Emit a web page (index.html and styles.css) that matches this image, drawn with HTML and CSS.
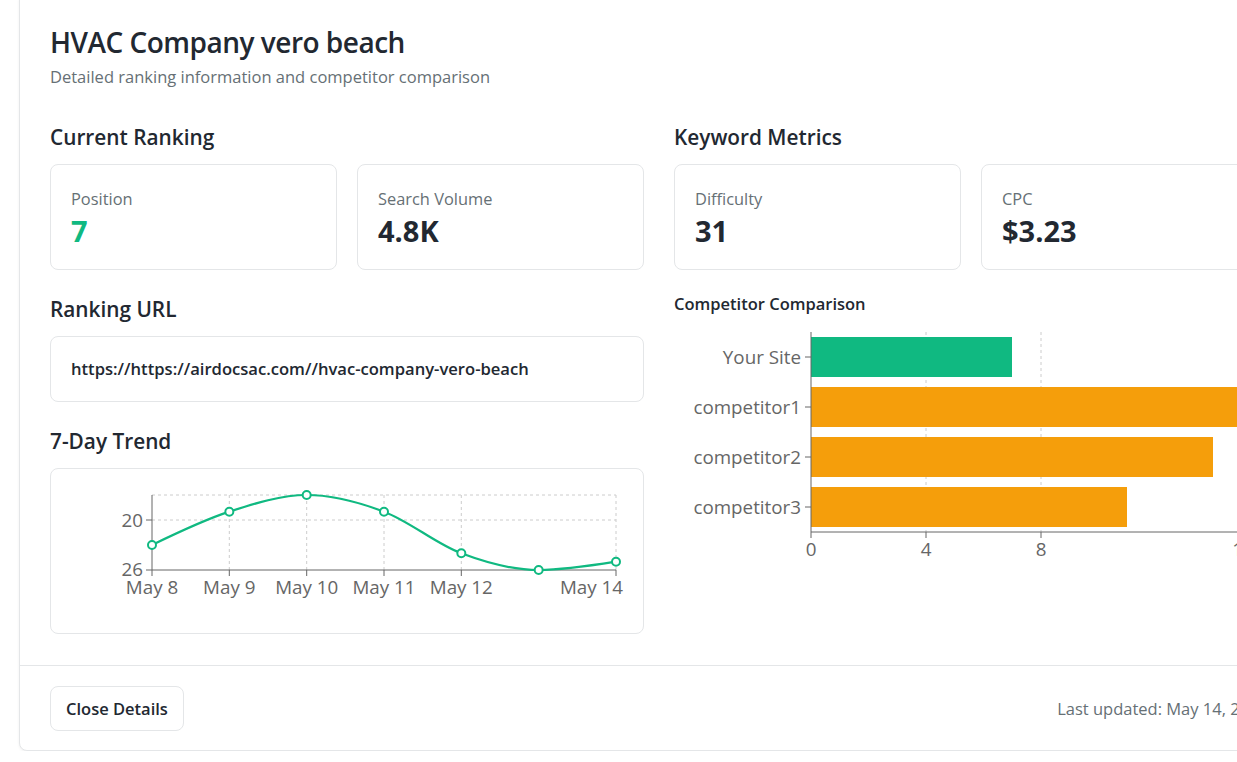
FILE: index.html
```html
<!DOCTYPE html>
<html lang="en">
<head>
<meta charset="utf-8">
<title>HVAC Company vero beach</title>
<link rel="stylesheet" href="styles.css">
</head>
<body>
<div class="card">
  <div class="card-body">
    <header class="head">
      <h1 class="title">HVAC Company vero beach</h1>
      <p class="subtitle">Detailed ranking information and competitor comparison</p>
    </header>
    <div class="columns">
      <section class="col">
        <h2 class="section-title">Current Ranking</h2>
        <div class="metrics">
          <div class="metric">
            <div class="metric-label">Position</div>
            <div class="metric-value green">7</div>
          </div>
          <div class="metric">
            <div class="metric-label">Search Volume</div>
            <div class="metric-value">4.8K</div>
          </div>
        </div>
        <h2 class="section-title">Ranking URL</h2>
        <div class="url-box">https://https://airdocsac.com//hvac-company-vero-beach</div>
        <h2 class="section-title">7-Day Trend</h2>
        <div class="chart-box">
          <svg class="line-chart" width="591" height="164" viewBox="51 469 591 164">
            <g class="grid">
              <line x1="152" y1="495" x2="616" y2="495"/>
              <line x1="152" y1="520" x2="616" y2="520"/>
              <line x1="229.3" y1="495" x2="229.3" y2="570"/>
              <line x1="306.7" y1="495" x2="306.7" y2="570"/>
              <line x1="384" y1="495" x2="384" y2="570"/>
              <line x1="461.3" y1="495" x2="461.3" y2="570"/>
              <line x1="616" y1="495" x2="616" y2="570"/>
            </g>
            <g class="axis">
              <line x1="152" y1="495" x2="152" y2="570"/>
              <line x1="152" y1="570" x2="616" y2="570"/>
              <line x1="146" y1="520" x2="152" y2="520"/>
              <line x1="146" y1="570" x2="152" y2="570"/>
              <line x1="152" y1="570" x2="152" y2="576"/>
              <line x1="229.3" y1="570" x2="229.3" y2="576"/>
              <line x1="306.7" y1="570" x2="306.7" y2="576"/>
              <line x1="384" y1="570" x2="384" y2="576"/>
              <line x1="461.3" y1="570" x2="461.3" y2="576"/>
              <line x1="616" y1="570" x2="616" y2="576"/>
            </g>
            <g class="tick-text">
              <text x="143" y="526.5" text-anchor="end">20</text>
              <text x="143" y="576" text-anchor="end">26</text>
              <text x="152" y="594" text-anchor="middle">May 8</text>
              <text x="229.3" y="594" text-anchor="middle">May 9</text>
              <text x="306.7" y="594" text-anchor="middle">May 10</text>
              <text x="384" y="594" text-anchor="middle">May 11</text>
              <text x="461.3" y="594" text-anchor="middle">May 12</text>
              <text x="623" y="594" text-anchor="end">May 14</text>
            </g>
            <path class="trend" d="M152,545 C177.78,532.5 203.56,520 229.33,511.67 C255.11,503.33 280.89,495 306.67,495 C332.44,495 358.22,501.94 384,511.67 C409.78,521.39 435.56,543.61 461.33,553.33 C487.11,563.06 512.89,570 538.67,570 C564.44,570 590.22,565.83 616,561.67"/>
            <g class="dots">
              <circle cx="152" cy="545" r="4"/>
              <circle cx="229.33" cy="511.67" r="4"/>
              <circle cx="306.67" cy="495" r="4"/>
              <circle cx="384" cy="511.67" r="4"/>
              <circle cx="461.33" cy="553.33" r="4"/>
              <circle cx="538.67" cy="570" r="4"/>
              <circle cx="616" cy="561.67" r="4"/>
            </g>
          </svg>
        </div>
      </section>
      <section class="col">
        <h2 class="section-title">Keyword Metrics</h2>
        <div class="metrics metrics-tight">
          <div class="metric">
            <div class="metric-label">Difficulty</div>
            <div class="metric-value">31</div>
          </div>
          <div class="metric">
            <div class="metric-label">CPC</div>
            <div class="metric-value">$3.23</div>
          </div>
        </div>
        <h3 class="sub-title">Competitor Comparison</h3>
        <svg class="bar-chart" width="594" height="250" viewBox="674 316 594 250">
          <g class="grid">
            <line x1="926" y1="332" x2="926" y2="532"/>
            <line x1="1041" y1="332" x2="1041" y2="532"/>
          </g>
          <rect class="bar-own" x="811" y="337" width="201" height="40"/>
          <rect class="bar-comp" x="811" y="387" width="431" height="40"/>
          <rect class="bar-comp" x="811" y="437" width="402" height="40"/>
          <rect class="bar-comp" x="811" y="487" width="316" height="40"/>
          <g class="axis">
            <line x1="811" y1="332" x2="811" y2="532"/>
            <line x1="811" y1="532" x2="1268" y2="532"/>
            <line x1="805" y1="357" x2="811" y2="357"/>
            <line x1="805" y1="407" x2="811" y2="407"/>
            <line x1="805" y1="457" x2="811" y2="457"/>
            <line x1="805" y1="507" x2="811" y2="507"/>
            <line x1="811" y1="532" x2="811" y2="538"/>
            <line x1="926" y1="532" x2="926" y2="538"/>
            <line x1="1041" y1="532" x2="1041" y2="538"/>
            <line x1="1242" y1="532" x2="1242" y2="538"/>
          </g>
          <g class="tick-text">
            <text x="801" y="363.5" text-anchor="end">Your Site</text>
            <text x="801" y="413.5" text-anchor="end">competitor1</text>
            <text x="801" y="463.5" text-anchor="end">competitor2</text>
            <text x="801" y="513.5" text-anchor="end">competitor3</text>
            <text x="811" y="556" text-anchor="middle">0</text>
            <text x="926" y="556" text-anchor="middle">4</text>
            <text x="1041" y="556" text-anchor="middle">8</text>
            <text x="1243" y="556" text-anchor="middle">15</text>
          </g>
        </svg>
      </section>
    </div>
  </div>
  <footer class="card-footer">
    <button class="btn" type="button">Close Details</button>
    <span class="updated">Last updated: May 14, 2025</span>
  </footer>
</div>
</body>
</html>
```

FILE: styles.css
```css
* { box-sizing: border-box; }

html, body {
  margin: 0;
  padding: 0;
  background: #ffffff;
  overflow: hidden;
}

body {
  font-family: "Open Sans", "Noto Sans", "Liberation Sans", sans-serif;
  color: #222831;
}

.card {
  width: 1280px;
  margin: -8px 0 0 19px;
  border: 1px solid #e4e6e8;
  border-radius: 8px;
  background: #fff;
  box-shadow: 0 1px 3px rgba(0, 0, 0, 0.06);
}

.card-body {
  padding: 31px 30px 31px;
}

.title {
  margin: 0;
  font-size: 28px;
  line-height: 36px;
  font-weight: 600;
  letter-spacing: -0.5px;
  color: #222831;
}

.subtitle {
  margin: 5px 0 0;
  font-size: 16.5px;
  line-height: 24px;
  color: #667075;
}

.columns {
  margin-top: 34px;
  display: grid;
  grid-template-columns: 594px 594px;
  column-gap: 30px;
  align-items: start;
}

.section-title {
  margin: 0 0 13px;
  font-size: 20.8px;
  line-height: 28px;
  font-weight: 600;
  color: #222831;
}

.metrics {
  display: grid;
  grid-template-columns: 1fr 1fr;
  column-gap: 20px;
  margin-bottom: 25px;
}

.metrics-tight {
  margin-bottom: 22px;
}

.metric {
  border: 1px solid #e4e6e8;
  border-radius: 8px;
  padding: 22px 20px 20px;
}

.metric-label {
  font-size: 16.4px;
  line-height: 24px;
  color: #667075;
}

.metric-value {
  margin-top: 2px;
  font-size: 29px;
  line-height: 36px;
  font-weight: 700;
  color: #222831;
}

.metric-value.green {
  color: #10b981;
}

.url-box {
  border: 1px solid #e4e6e8;
  border-radius: 8px;
  padding: 20px;
  margin-bottom: 25px;
  font-size: 16.6px;
  line-height: 24px;
  font-weight: 600;
  color: #222831;
}

.chart-box {
  height: 166px;
  border: 1px solid #e4e6e8;
  border-radius: 8px;
  overflow: hidden;
}

.line-chart,
.bar-chart {
  display: block;
  overflow: visible;
}

.sub-title {
  margin: 0;
  font-size: 16.5px;
  line-height: 24px;
  font-weight: 600;
  color: #222831;
}

.grid line {
  stroke: #cccccc;
  stroke-dasharray: 3 3;
  stroke-width: 1;
}

.axis line {
  stroke: #666666;
  stroke-width: 1;
}

.tick-text text {
  fill: #666666;
  font-size: 18.8px;
}

.trend {
  fill: none;
  stroke: #10b981;
  stroke-width: 2.2;
}

.dots circle {
  fill: #ffffff;
  stroke: #10b981;
  stroke-width: 2;
}

.bar-own { fill: #10b981; }
.bar-comp { fill: #f59e0b; }

.card-footer {
  border-top: 1px solid #e4e6e8;
  padding: 20px 30px 19px;
  display: flex;
  align-items: center;
  justify-content: space-between;
}

.btn {
  font-family: inherit;
  font-size: 16.5px;
  line-height: 23px;
  font-weight: 600;
  color: #222831;
  background: #fff;
  border: 1px solid #e4e6e8;
  border-radius: 8px;
  padding: 10px 15px;
}

.updated {
  font-size: 16.5px;
  line-height: 24px;
  color: #667075;
}
```
